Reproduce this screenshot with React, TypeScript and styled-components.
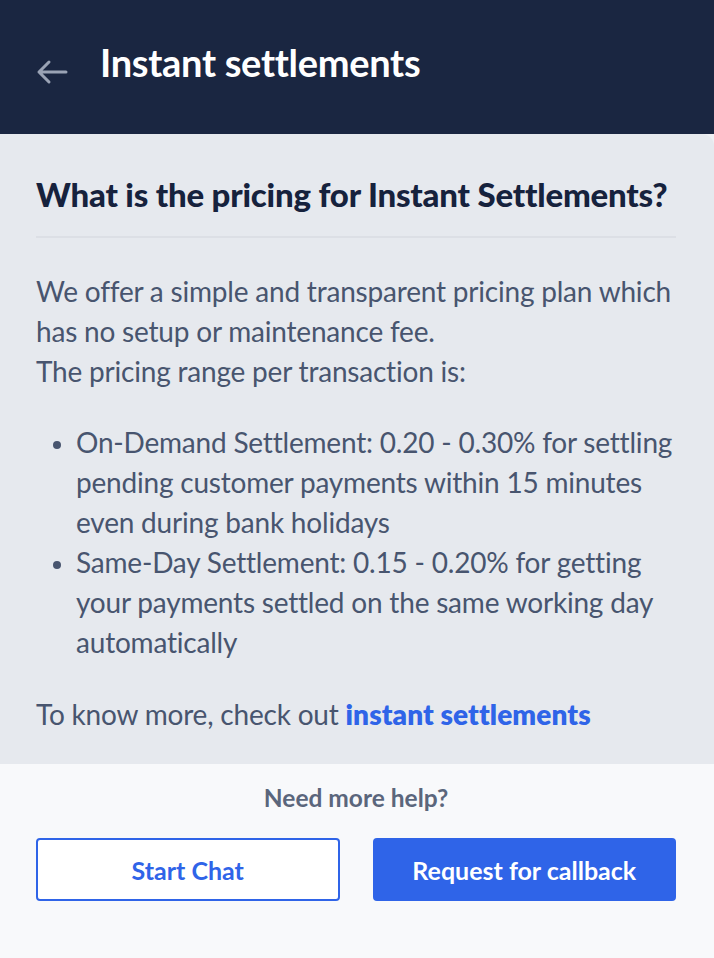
import React from "react";
import styled, { createGlobalStyle } from "styled-components";

const GlobalStyle = createGlobalStyle`
  html, body {
    margin: 0;
    padding: 0;
    background: #f8f9fb;
  }
  body {
    font-family: Lato, "Open Sans", sans-serif;
  }
`;

const Page = styled.div`
  display: flex;
  flex-direction: column;
  width: 714px;
  height: 958px;
  background: #f8f9fb;
`;

const Header = styled.header`
  display: flex;
  align-items: center;
  height: 134px;
  padding: 0 0 0 36px;
  box-sizing: border-box;
  background: #1a2641;
`;

const BackButton = styled.button`
  display: flex;
  align-items: center;
  justify-content: center;
  width: 32px;
  height: 32px;
  margin: 10px 32px 0 0;
  padding: 0;
  border: none;
  background: transparent;
  color: #9aa3b5;
  cursor: pointer;
`;

const HeaderTitle = styled.h1`
  margin: 0 0 10px;
  font-size: 38px;
  font-weight: 700;
  color: #ffffff;
  letter-spacing: -0.3px;
`;

const PanelBack = styled.div`
  background: #eef0f4;
`;

const Panel = styled.section`
  padding: 36px 38px 30px 36px;
  background: #e6e9ee;
  border-top-right-radius: 12px;
`;

const Question = styled.h2`
  margin: 0;
  padding-bottom: 18px;
  border-bottom: 2px solid #dcdfe5;
  font-size: 33px;
  font-weight: 900;
  color: #16223d;
  line-height: 48px;
  letter-spacing: -0.2px;
`;

const Body = styled.div`
  padding-top: 33px;
  font-size: 28px;
  line-height: 40px;
  color: #48556f;
  letter-spacing: -0.2px;
`;

const Para = styled.p`
  margin: 0;
`;

const List = styled.ul`
  margin: 31px 0 32px;
  padding-left: 40px;
`;

const Item = styled.li`
  &::marker {
    font-size: 24px;
  }
`;

const Link = styled.a`
  color: #2f64e8;
  font-weight: 800;
  letter-spacing: 0.1px;
  text-decoration: none;
`;

const Footer = styled.footer`
  display: flex;
  flex-direction: column;
  align-items: center;
  padding: 20px 38px 0 36px;
  background: #f8f9fb;
`;

const HelpText = styled.div`
  font-size: 24.5px;
  font-weight: 700;
  color: #5b667c;
  line-height: 28px;
`;

const Buttons = styled.div`
  display: grid;
  grid-template-columns: 1fr 1fr;
  gap: 33px;
  width: 100%;
  margin-top: 26px;
`;

const Button = styled.button<{ $primary?: boolean }>`
  height: 63px;
  border-radius: 4px;
  border: 2px solid #2f64e8;
  background: ${(p) => (p.$primary ? "#2f64e8" : "#ffffff")};
  color: ${(p) => (p.$primary ? "#ffffff" : "#2f64e8")};
  font-family: Lato, sans-serif;
  font-size: 25px;
  font-weight: 700;
  cursor: pointer;
`;

const ArrowLeft = () => (
  <svg width="32" height="26" viewBox="0 0 32 26" fill="none">
    <path
      d="M30 13H3M13 3L3 13l10 10"
      stroke="currentColor"
      strokeWidth="3"
      strokeLinecap="round"
      strokeLinejoin="round"
    />
  </svg>
);

export default function App() {
  return (
    <Page>
      <GlobalStyle />
      <Header>
        <BackButton aria-label="Back">
          <ArrowLeft />
        </BackButton>
        <HeaderTitle>Instant settlements</HeaderTitle>
      </Header>
      <PanelBack>
        <Panel>
          <Question>What is the pricing for Instant Settlements?</Question>
          <Body>
            <Para>
              We offer a simple and transparent pricing plan which has no setup or maintenance fee.
              <br />
              The pricing range per transaction is:
            </Para>
            <List>
              <Item>
                On-Demand Settlement: 0.20 - 0.30% for settling pending customer payments within 15
                minutes even during bank holidays
              </Item>
              <Item>
                Same-Day Settlement: 0.15 - 0.20% for getting your payments settled on the same
                working day automatically
              </Item>
            </List>
            <Para>
              To know more, check out <Link href="#">instant settlements</Link>
            </Para>
          </Body>
        </Panel>
      </PanelBack>
      <Footer>
        <HelpText>Need more help?</HelpText>
        <Buttons>
          <Button>Start Chat</Button>
          <Button $primary>Request for callback</Button>
        </Buttons>
      </Footer>
    </Page>
  );
}
